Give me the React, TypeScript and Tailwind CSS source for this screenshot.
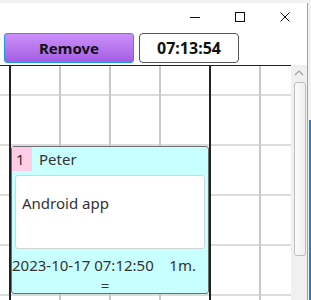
import React from "react";

const font = "font-['Segoe_UI','Noto_Sans','Open_Sans',sans-serif]";

function CaptionButtons() {
  return (
    <div className="flex h-[28px] justify-end">
      <div className="flex w-[45px] items-center justify-center">
        <svg width="10" height="10" viewBox="0 0 10 10">
          <path d="M0 5.5h10" stroke="#111" strokeWidth="1" />
        </svg>
      </div>
      <div className="flex w-[45px] items-center justify-center">
        <svg width="10" height="10" viewBox="0 0 10 10">
          <rect x="0.5" y="0.5" width="9" height="9" fill="none" stroke="#111" strokeWidth="1" />
        </svg>
      </div>
      <div className="flex w-[45px] items-center justify-center">
        <svg width="10" height="10" viewBox="0 0 10 10">
          <path d="M0.5 0.5l9 9M9.5 0.5l-9 9" stroke="#111" strokeWidth="1" />
        </svg>
      </div>
    </div>
  );
}

function Scrollbar() {
  return (
    <div className="flex w-[16px] flex-col items-center bg-[#f0f0f0]">
      <div className="flex h-[16px] w-full items-center justify-center">
        <svg width="10" height="6" viewBox="0 0 10 6">
          <path d="M1 5l4-4 4 4" fill="none" stroke="#a0a0a0" strokeWidth="1.2" />
        </svg>
      </div>
      <div className="ml-[2px] mt-[1px] h-[174px] w-[12px] rounded-[3px] border border-[#bdbdbd] bg-[linear-gradient(to_right,#fbfbfb,#efefef)]" />
    </div>
  );
}

function Card() {
  return (
    <div className="absolute left-[11px] top-[80px] flex h-[148px] w-[198px] flex-col rounded-[3px] border border-[#6e6e6e] bg-[#c8ffff] text-[15px] text-[#333]">
      <div className="flex h-[24px] shrink-0 items-center">
        <span className="flex h-full w-[20px] items-center pl-[4px] bg-[#ffcce8]">1</span>
        <span className="pl-[7px]">Peter</span>
      </div>
      <div className="mx-[3px] mt-[4px] h-[74px] shrink-0 rounded-[3px] border border-[#d4d4d4] bg-white pl-[6px] pt-[17px] leading-[20px]">
        Android app
      </div>
      <div className="mt-[6px] shrink-0 leading-[20px]">
        <div className="whitespace-pre">2023-10-17 07:12:50    1m.</div>
        <div className="pr-[10px] text-center">=</div>
      </div>
    </div>
  );
}

export default function App() {
  return (
    <div className={`flex h-[300px] w-[311px] flex-col overflow-hidden bg-[#f2f2f2] ${font}`}>
      <div className="h-[3px]" />
      <div className="flex flex-1">
        <div className="flex w-[308px] flex-col border-r border-[#a0a0a0] bg-white">
          <CaptionButtons />
          <div className="flex h-[34px] gap-[5px] pl-[4px] pt-[2px]">
            <button className="h-[30px] w-[130px] rounded-[3px] border border-[#1e9be0] bg-[linear-gradient(to_bottom,#cb8ff9,#a45ee2)] text-[15px] font-bold text-[#111]">
              Remove
            </button>
            <div className="flex h-[30px] w-[100px] items-center justify-center rounded-[4px] border border-[#555] text-[16px] font-bold text-[#111]">
              07:13:54
            </div>
          </div>
          <div className="flex flex-1">
            <div className="relative w-[291px] border-t border-[#222] bg-white bg-[linear-gradient(to_right,transparent_9px,#222_9px,#222_11px,transparent_11px),linear-gradient(to_right,#c8c8c8_2px,transparent_2px),linear-gradient(to_bottom,#dcdcdc_2px,transparent_2px)] bg-size-[200px_100%,50px_50px,50px_50px] bg-position-[0_0,9px_0,0_28px]">
              <Card />
            </div>
            <Scrollbar />
          </div>
        </div>
        <div className="w-[3px] pl-[1px]">
          <div className="mt-[117px] h-full w-[2px] bg-[#2b7bd0]" />
        </div>
      </div>
    </div>
  );
}
